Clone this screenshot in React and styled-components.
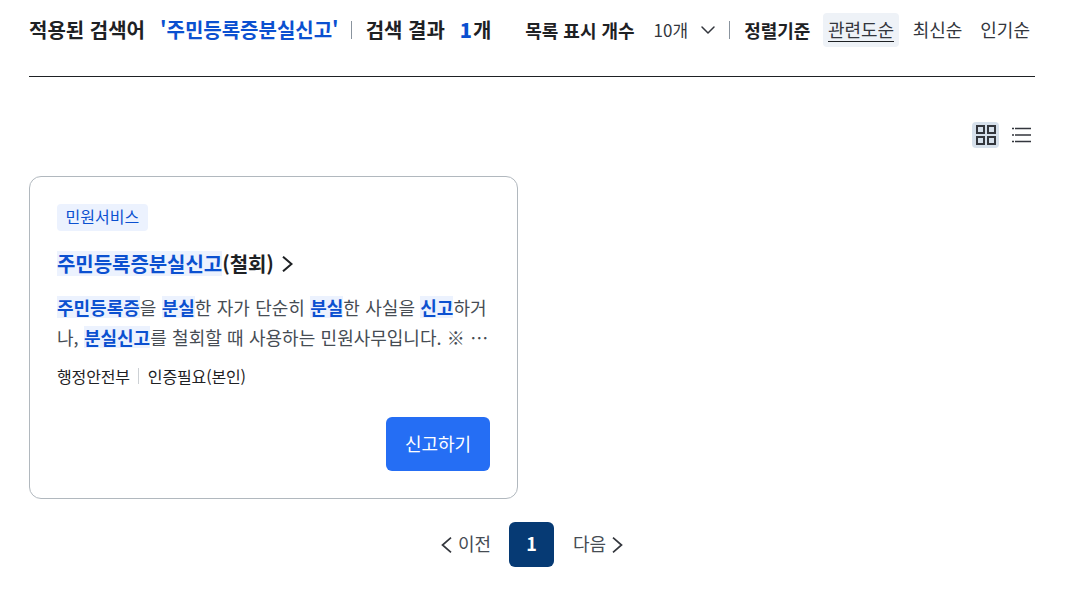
import React from "react";
import styled, { createGlobalStyle } from "styled-components";
import { ChevronDown } from "lucide-react";

const Global = createGlobalStyle`
  html, body {
    margin: 0;
    background: #fff;
    font-family: "Noto Sans CJK KR", "Noto Sans", sans-serif;
    color: #1e2124;
  }
`;
const Page = styled.div`
  width: 1006px;
  margin-left: 29px;
`;
const TopBar = styled.div`
  display: flex;
  align-items: center;
  justify-content: space-between;
  height: 77px;
  padding-bottom: 17px;
  box-sizing: border-box;
  border-bottom: 1px solid #1e2124;
`;
const Group = styled.div`
  display: flex;
  align-items: center;
`;
const Heading = styled.span`
  font-size: 20px;
  font-weight: 700;
  white-space: nowrap;
  margin-left: ${(p) => p.$gap || 0}px;
  color: ${(p) => (p.$blue ? "#0b50d0" : "#1e2124")};
`;
const Num = styled.b`
  color: #0b50d0;
  margin-right: 1px;
`;
const Sep = styled.i`
  width: 1px;
  height: 18px;
  background: #8a949e;
  margin: 0 14px 0 ${(p) => p.$left}px;
`;
const Label = styled.span`
  font-size: 18px;
  font-weight: 700;
  white-space: nowrap;
`;
const Count = styled.span`
  display: flex;
  align-items: center;
  font-size: 17px;
  margin-left: 19px;
  gap: 8px;
  color: #33363d;
`;
const Sort = styled.span`
  display: flex;
  align-items: center;
  font-size: 18px;
  padding: 0 ${(p) => (p.$active ? 4.5 : 5)}px;
  height: 34px;
  margin-left: ${(p) => p.$gap}px;
  border-radius: 4px;
  white-space: nowrap;
  color: #33363d;
  background: ${(p) => (p.$active ? "#eef2f7" : "transparent")};
`;
const SortText = styled.span`
  line-height: 24px;
  border-bottom: 1px solid ${(p) => (p.$active ? "#1e2124" : "transparent")};
`;
const ViewRow = styled.div`
  display: flex;
  justify-content: flex-end;
  align-items: center;
  gap: 12px;
  margin-top: 45px;
  padding-right: 4px;
`;
const ViewButton = styled.span`
  width: ${(p) => (p.$active ? 27 : 20)}px;
  height: 26px;
  display: flex;
  align-items: center;
  justify-content: center;
  border-radius: 4px;
  background: ${(p) => (p.$active ? "#d6e0eb" : "transparent")};
`;
const Card = styled.article`
  width: 489px;
  height: 323px;
  box-sizing: border-box;
  margin-top: 28px;
  padding: 27px;
  border: 1px solid #b1b8be;
  border-radius: 12px;
  display: flex;
  flex-direction: column;
  align-items: flex-start;
`;
const Tag = styled.span`
  height: 27px;
  line-height: 25px;
  padding: 0 8.5px;
  font-size: 16px;
  border-radius: 4px;
  color: #0b50d0;
  background: #ecf2fe;
`;
const Title = styled.h3`
  display: flex;
  align-items: center;
  gap: 8px;
  margin: 18px 0 0;
  font-size: 20px;
  line-height: 30px;
  font-weight: 700;
  letter-spacing: -0.05px;
`;
const Mark = styled.mark`
  display: inline-block;
  line-height: ${(p) => p.$height}px;
  color: #0b50d0;
  background: #ecf2fe;
  font-weight: 700;
`;
const Desc = styled.p`
  margin: 13px 0 0;
  font-size: 18px;
  line-height: 30px;
  width: 434px;
  color: #464c53;
  word-break: break-all;
  word-spacing: 0.3px;
`;
const Meta = styled.div`
  display: flex;
  align-items: center;
  margin-top: 12px;
  font-size: 16px;
  line-height: 24px;
  letter-spacing: -0.15px;
`;
const MetaSep = styled.i`
  width: 1px;
  height: 16px;
  background: #cdd1d5;
  margin: 0 8.5px;
`;
const Action = styled.button`
  align-self: flex-end;
  margin-top: auto;
  width: 104px;
  height: 54px;
  padding: 0 0 3px;
  border: 0;
  border-radius: 6px;
  background: #256ef4;
  color: #fff;
  font: inherit;
  font-size: 18px;
`;
const Pager = styled.nav`
  display: flex;
  align-items: center;
  justify-content: center;
  margin-top: 23px;
  font-size: 18px;
  color: #464c53;
`;
const PageLink = styled.span`
  display: flex;
  align-items: center;
  gap: 6px;
  line-height: 26px;
  padding-bottom: 3px;
`;
const Current = styled.span`
  width: 45px;
  height: 45px;
  padding-bottom: 3px;
  box-sizing: border-box;
  margin: 0 19px 0 18px;
  display: flex;
  align-items: center;
  justify-content: center;
  border-radius: 6px;
  background: #063a74;
  color: #fff;
  font-weight: 700;
`;
const PageIcon = styled.svg`
  margin-top: 3px;
`;

const GridIcon = () => (
  <svg width="20" height="20" viewBox="0 0 20 20" fill="none" stroke="#33363d" strokeWidth="2">
    <rect x="1" y="1" width="7" height="7" />
    <rect x="12" y="1" width="7" height="7" />
    <rect x="1" y="12" width="7" height="7" />
    <rect x="12" y="12" width="7" height="7" />
  </svg>
);
const ListIcon = () => (
  <svg width="20" height="20" viewBox="0 0 20 20" fill="none" stroke="#33363d" strokeWidth="1.6">
    <path d="M4 3.5h16M4 10h16M4 16.5h16" />
    <path d="M1 3.5h2M1 10h2M1 16.5h2" />
  </svg>
);
const Arrow = ({ left }) => (
  <PageIcon width="11" height="16" viewBox="0 0 11 16" fill="none" stroke="#33363d" strokeWidth="1.7">
    <path d={left ? "M10 .7 1.5 8l8.5 7.3" : "M1 .7 9.5 8 1 15.3"} />
  </PageIcon>
);
const TitleArrow = () => (
  <svg width="11" height="16" viewBox="0 0 11 16" fill="none" stroke="#1e2124" strokeWidth="2">
    <path d="M1 .7 9.5 8 1 15.3" />
  </svg>
);

export default function App() {
  return (
    <Page lang="ko">
      <Global />
      <TopBar>
        <Group>
          <Heading>적용된 검색어</Heading>
          <Heading $blue $gap={15}>'주민등록증분실신고'</Heading>
          <Sep $left={12} />
          <Heading>검색 결과</Heading>
          <Heading $gap={15}><Num>1</Num>개</Heading>
        </Group>
        <Group>
          <Label>목록 표시 개수</Label>
          <Count>10개 <ChevronDown size={24} strokeWidth={1.5} /></Count>
          <Sep $left={9} />
          <Label>정렬기준</Label>
          <Sort $active $gap={13}><SortText $active>관련도순</SortText></Sort>
          <Sort $gap={9}><SortText>최신순</SortText></Sort>
          <Sort $gap={8}><SortText>인기순</SortText></Sort>
        </Group>
      </TopBar>
      <ViewRow>
        <ViewButton $active><GridIcon /></ViewButton>
        <ViewButton><ListIcon /></ViewButton>
      </ViewRow>
      <Card>
        <Tag>민원서비스</Tag>
        <Title>
          <span><Mark $height={25}>주민등록증분실신고</Mark>(철회)</span>
          <TitleArrow />
        </Title>
        <Desc>
          <Mark $height={22}>주민등록증</Mark>을 <Mark $height={22}>분실</Mark>한 자가 단순히 <Mark $height={22}>분실</Mark>한 사실을 <Mark $height={22}>신고</Mark>하거나, <Mark $height={22}>분실신고</Mark>를 철회할 때 사용하는 민원사무입니다. ※ …
        </Desc>
        <Meta>행정안전부<MetaSep />인증필요(본인)</Meta>
        <Action>신고하기</Action>
      </Card>
      <Pager>
        <PageLink><Arrow left />이전</PageLink>
        <Current>1</Current>
        <PageLink>다음<Arrow /></PageLink>
      </Pager>
    </Page>
  );
}
